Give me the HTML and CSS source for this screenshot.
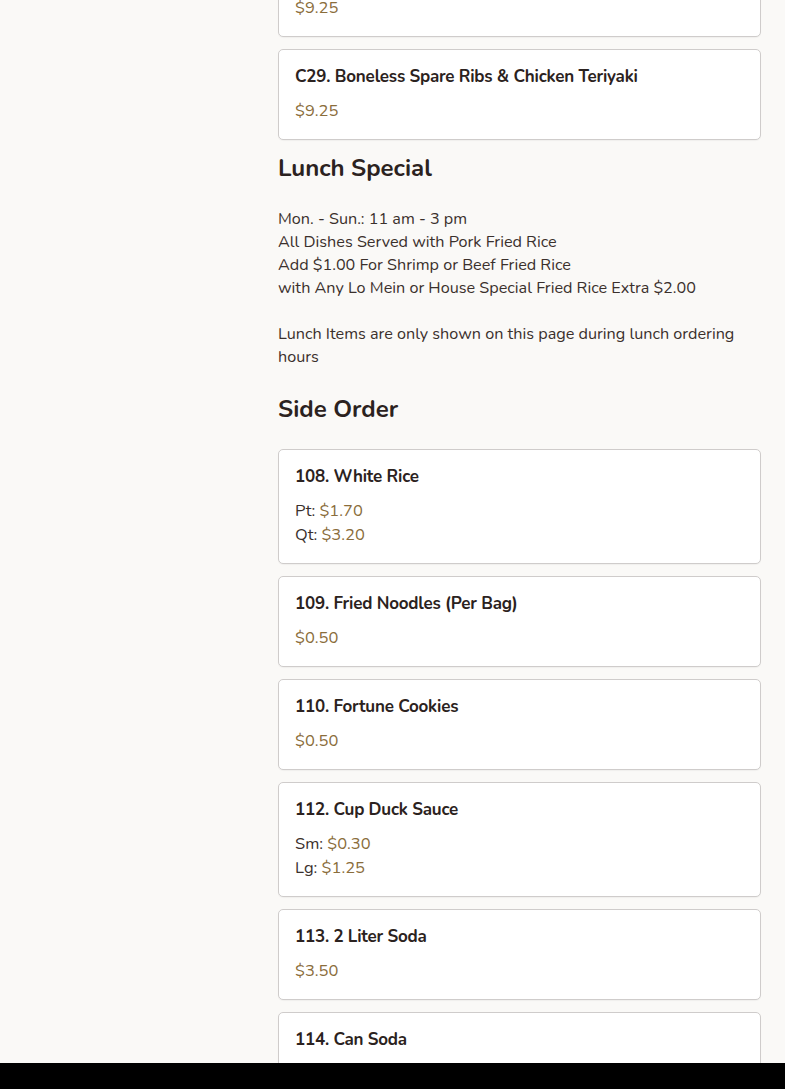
FILE: index.html
```html
<!DOCTYPE html>
<html lang="en">
<head>
<meta charset="utf-8">
<title>Menu</title>
<link rel="stylesheet" href="styles.css">
</head>
<body>
<div class="page">
  <aside class="sidebar"></aside>
  <main class="menu">
    <div class="card card-cut">
      <div class="price">$9.25</div>
    </div>
    <div class="card">
      <h3 class="title">C29. Boneless Spare Ribs &amp; Chicken Teriyaki</h3>
      <div class="price">$9.25</div>
    </div>

    <h2 class="section">Lunch Special</h2>
    <p class="desc">Mon. - Sun.: 11 am - 3 pm<br>All Dishes Served with Pork Fried Rice<br>Add $1.00 For Shrimp or Beef Fried Rice<br>with Any Lo Mein or House Special Fried Rice Extra $2.00<br><br>Lunch Items are only shown on this page during lunch ordering hours</p>

    <h2 class="section section-side">Side Order</h2>
    <div class="cards">
      <div class="card">
        <h3 class="title">108. White Rice</h3>
        <div class="opts">
          <div class="opt">Pt: <span class="price">$1.70</span></div>
          <div class="opt">Qt: <span class="price">$3.20</span></div>
        </div>
      </div>
      <div class="card">
        <h3 class="title">109. Fried Noodles (Per Bag)</h3>
        <div class="price">$0.50</div>
      </div>
      <div class="card">
        <h3 class="title">110. Fortune Cookies</h3>
        <div class="price">$0.50</div>
      </div>
      <div class="card">
        <h3 class="title">112. Cup Duck Sauce</h3>
        <div class="opts">
          <div class="opt">Sm: <span class="price">$0.30</span></div>
          <div class="opt">Lg: <span class="price">$1.25</span></div>
        </div>
      </div>
      <div class="card">
        <h3 class="title">113. 2 Liter Soda</h3>
        <div class="price">$3.50</div>
      </div>
      <div class="card">
        <h3 class="title">114. Can Soda</h3>
        <div class="price">$1.25</div>
      </div>
    </div>
  </main>
</div>
<div class="bottom-bar"></div>
</body>
</html>
```

FILE: styles.css
```css
html, body {
  margin: 0;
  padding: 0;
  background: #faf9f7;
  font-family: "Nunito", Lato, "Liberation Sans", sans-serif;
  color: #3a302c;
  overflow: hidden;
  height: 1089px;
}
.page {
  display: flex;
  margin-top: -52px;
}
.sidebar {
  width: 278px;
  flex: none;
}
.menu {
  width: 483px;
  flex: none;
  display: flex;
  flex-direction: column;
}
.cards {
  display: flex;
  flex-direction: column;
  gap: 12px;
}
.card {
  background: #fff;
  border: 1px solid #cfcccb;
  border-radius: 5px;
  padding: 15px 16px 16px;
  display: flex;
  flex-direction: column;
  gap: 10px;
  box-shadow: 0 1px 1px rgba(0,0,0,0.04);
}
.card-cut {
  padding-top: 47px;
  margin-bottom: 12px;
}
.title {
  margin: 0;
  font-size: 17px;
  line-height: 24px;
  font-weight: 700;
  color: #2b2220;
  letter-spacing: -0.2px;
}
.price {
  font-size: 16.5px;
  line-height: 24px;
  color: #8a6d3b;
}
.opt {
  font-size: 16.5px;
  line-height: 24px;
  color: #3a302c;
}
.section {
  margin: 12px 0 0;
  font-size: 24px;
  line-height: 32px;
  font-weight: 700;
  color: #2b2220;
}
.desc {
  margin: 24px 0 0;
  font-size: 16.2px;
  line-height: 23px;
  color: #3a302c;
}
.section-side {
  margin: 24px 0 24px;
}
.bottom-bar {
  position: fixed;
  left: 0;
  right: 0;
  bottom: 0;
  height: 26px;
  background: #000;
}
```
